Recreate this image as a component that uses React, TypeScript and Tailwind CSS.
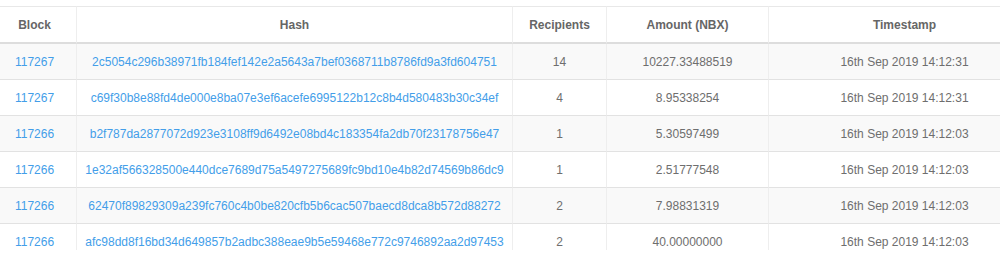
import React from "react";

const rows = [
  ["117267", "2c5054c296b38971fb184fef142e2a5643a7bef0368711b8786fd9a3fd604751", "14", "10227.33488519", "16th Sep 2019 14:12:31"],
  ["117267", "c69f30b8e88fd4de000e8ba07e3ef6acefe6995122b12c8b4d580483b30c34ef", "4", "8.95338254", "16th Sep 2019 14:12:31"],
  ["117266", "b2f787da2877072d923e3108ff9d6492e08bd4c183354fa2db70f23178756e47", "1", "5.30597499", "16th Sep 2019 14:12:03"],
  ["117266", "1e32af566328500e440dce7689d75a5497275689fc9bd10e4b82d74569b86dc9", "1", "2.51777548", "16th Sep 2019 14:12:03"],
  ["117266", "62470f89829309a239fc760c4b0be820cfb5b6cac507baecd8dca8b572d88272", "2", "7.98831319", "16th Sep 2019 14:12:03"],
  ["117266", "afc98dd8f16bd34d649857b2adbc388eae9b5e59468e772c9746892aa2d97453", "2", "40.00000000", "16th Sep 2019 14:12:03"],
];

const widths = ["w-[76px]", "w-[436px]", "w-[94px]", "w-[162px]", "w-[272px]"];
const headers = ["Block", "Hash", "Recipients", "Amount (NBX)", "Timestamp"];

export default function App() {
  return (
    <div
      className="w-[1000px] h-[257px] bg-white overflow-hidden pt-[6px]"
      style={{ fontFamily: '"Liberation Sans", Arial, sans-serif' }}
    >
      <div className="h-[244px] overflow-hidden">
        <table className="w-[1040px] border-separate border-spacing-0 table-fixed text-[12px]">
          <colgroup>
            {widths.map((w, i) => (
              <col key={i} className={w} />
            ))}
          </colgroup>
          <thead>
            <tr>
              {headers.map((h, i) => (
                <th
                  key={h}
                  className={`p-0 border-t border-t-[#e8e8e8] border-b-2 border-b-[#dddddd] ${
                    i > 0 ? "border-l border-l-[#eeeeee]" : ""
                  }`}
                >
                  <div
                    className={`h-[35px] flex items-center justify-center font-bold text-[#666666] ${
                      i === 0 ? "pr-[7px]" : ""
                    }`}
                  >
                    {h}
                  </div>
                </th>
              ))}
            </tr>
          </thead>
          <tbody>
            {rows.map((r, ri) => (
              <tr key={ri} className={ri % 2 === 0 ? "bg-[#f9f9f9]" : "bg-white"}>
                {r.map((c, ci) => (
                  <td
                    key={ci}
                    className={`p-0 border-b border-b-[#e2e2e2] ${
                      ci > 0 ? "border-l border-l-[#eeeeee]" : ""
                    }`}
                  >
                    <div
                      className={`h-[35px] flex items-center justify-center whitespace-nowrap ${
                        ci === 0 ? "pr-[7px]" : ""
                      } ${ci < 2 ? "text-[#439ee9]" : "text-[#6e6e6e]"}`}
                    >
                      {c}
                    </div>
                  </td>
                ))}
              </tr>
            ))}
          </tbody>
        </table>
      </div>
    </div>
  );
}
